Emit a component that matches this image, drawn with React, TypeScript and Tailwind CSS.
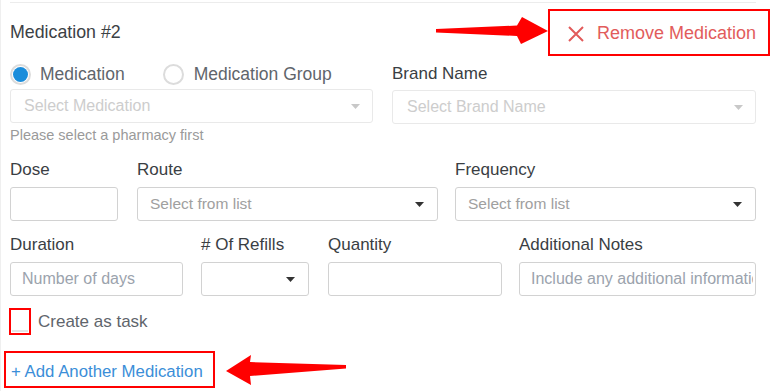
type CaretProps = { muted?: boolean };

const Caret = ({ muted = false }: CaretProps) => (
  <svg width="9" height="5" viewBox="0 0 9 5" className="shrink-0">
    <path d="M0 0h9L4.5 5z" fill={muted ? '#c8c8c8' : '#333'} />
  </svg>
);

type FieldProps = {
  label: string;
  className: string;
  children: React.ReactNode;
};

const Field = ({ label, className, children }: FieldProps) => (
  <div className={className}>
    <div className="h-[18px] leading-[18px] text-[17px] text-[#3a3e43] whitespace-nowrap">{label}</div>
    <div className="mt-[8px] h-[34px]">{children}</div>
  </div>
);

const Input = ({ placeholder }: { placeholder?: string }) => (
  <input
    readOnly
    placeholder={placeholder}
    className="w-full h-full border border-[#d2d2d2] rounded-[3px] bg-white pl-[11px] pr-[2px] text-[16px] outline-none placeholder:text-[#9ba3ad]"
  />
);

const Select = ({ placeholder }: { placeholder?: string }) => (
  <div className="h-full border border-[#d2d2d2] rounded-[3px] bg-white flex items-center justify-between pl-[12px] pr-[13px]">
    <span className="text-[15.5px] text-[#a0a0a0] whitespace-nowrap">{placeholder}</span>
    <Caret />
  </div>
);

const DisabledSelect = ({ placeholder, className }: { placeholder: string; className: string }) => (
  <div
    className={`h-[34px] border border-[#e9e9e9] rounded-[3px] bg-white flex items-center justify-between pr-[12px] ${className}`}
  >
    <span className="text-[16px] text-[#cdcdcd] whitespace-nowrap">{placeholder}</span>
    <Caret muted />
  </div>
);

const Arrows = () => (
  <svg className="absolute inset-0 pointer-events-none" width="779" height="391" viewBox="0 0 779 391">
    {/* points at Remove Medication */}
    <polygon points="435,29 516,25.5 521,17 547,31 520,44 516,36 435,32.5" fill="#ff0000" />
    {/* points at Add Another Medication */}
    <polygon points="345,365 249,362 250,355 225,371 250,385 249,376 345,368.5" fill="#ff0000" />
  </svg>
);

const App = () => {
  return (
    <div className="relative w-[779px] h-[391px] bg-white border-l border-[#efefef] overflow-hidden font-['Liberation_Sans',Arial,sans-serif]">
      <div className="ml-[9px] w-[746px] pt-[2px]">
        <div className="border-t border-[#ececec]" />

        {/* header */}
        <div className="mt-[6px] h-[47px] flex items-center justify-between">
          <div className="text-[17.8px] text-[#3c4145]">Medication #2</div>
          <div className="-mr-[14px] w-[222px] h-[47px] border-2 border-[#ff0000] flex items-center pl-[18px] pt-[2px]">
            <svg width="16" height="16" viewBox="0 0 16 16" className="shrink-0">
              <path d="M1 1L15 15M15 1L1 15" stroke="#e25a5a" strokeWidth="2" />
            </svg>
            <span className="ml-[13px] text-[18px] text-[#e25c5c] whitespace-nowrap">Remove Medication</span>
          </div>
        </div>

        {/* medication / brand */}
        <div className="mt-[7px] grid grid-cols-[363px_364px] gap-x-[19px]">
          <div>
            <div className="h-[22px] flex items-center">
              <div className="w-[21px] h-[21px] rounded-full border-2 border-[#dcdcdc] flex items-center justify-center">
                <div className="w-[15px] h-[15px] rounded-full bg-[#1a8ddb]" />
              </div>
              <span className="ml-[9px] text-[17.5px] text-[#5f656c]">Medication</span>
              <div className="ml-[38px] w-[21px] h-[21px] rounded-full border-2 border-[#dcdcdc] bg-white" />
              <span className="ml-[10px] text-[17.5px] text-[#5f656c]">Medication Group</span>
            </div>
            <DisabledSelect placeholder="Select Medication" className="mt-[4px] pl-[13px]" />
            <div className="mt-[3px] leading-[18px] text-[14.5px] text-[#9a9a9a]">Please select a pharmacy first</div>
          </div>
          <div>
            <div className="h-[22px] flex items-center text-[17px] text-[#3a3e43]">Brand Name</div>
            <DisabledSelect placeholder="Select Brand Name" className="mt-[5px] pl-[14px]" />
          </div>
        </div>

        {/* dose / route / frequency */}
        <div className="mt-[17px] flex">
          <Field label="Dose" className="w-[108px]">
            <Input />
          </Field>
          <Field label="Route" className="ml-[19px] w-[301px]">
            <Select placeholder="Select from list" />
          </Field>
          <Field label="Frequency" className="ml-[17px] w-[301px]">
            <Select placeholder="Select from list" />
          </Field>
        </div>

        {/* duration / refills / quantity / notes */}
        <div className="mt-[15px] flex">
          <Field label="Duration" className="w-[173px]">
            <Input placeholder="Number of days" />
          </Field>
          <Field label="# Of Refills" className="ml-[18px] w-[108px]">
            <Select />
          </Field>
          <Field label="Quantity" className="ml-[19px] w-[174px]">
            <Input />
          </Field>
          <Field label="Additional Notes" className="ml-[17px] w-[237px]">
            <Input placeholder="Include any additional information" />
          </Field>
        </div>

        {/* create as task */}
        <div className="mt-[12px] h-[27px] flex items-center">
          <div className="-ml-[1px] w-[22px] h-[27px] border-2 border-[#ff0000] flex items-end px-[1px] pb-[1px]">
            <div className="w-full h-[2px] bg-[#e4e4e4]" />
          </div>
          <span className="ml-[7px] text-[17px] text-[#5f656c]">Create as task</span>
        </div>

        {/* add another */}
        <div className="mt-[16px] -ml-[6px] w-[211px] h-[37px] border-2 border-[#ff0000] flex items-center pl-[5px] pt-[4px]">
          <span className="text-[16.8px] text-[#3b8ed8] whitespace-nowrap">+ Add Another Medication</span>
        </div>
      </div>

      <Arrows />
    </div>
  );
};

export default App;
